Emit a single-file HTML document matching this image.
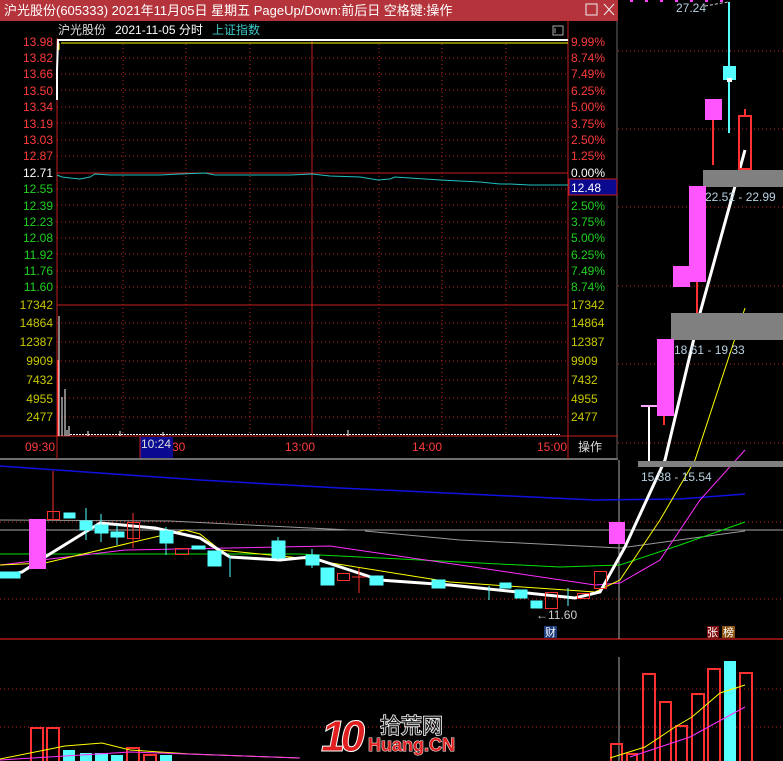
<!DOCTYPE html>
<html><head><meta charset="utf-8"><style>
html,body{margin:0;padding:0;background:#000;width:783px;height:761px;overflow:hidden}
svg{display:block;font-family:"Liberation Sans","Noto Sans CJK SC",sans-serif}
</style></head><body>
<svg width="783" height="761" viewBox="0 0 783 761" xmlns="http://www.w3.org/2000/svg">
<rect width="783" height="761" fill="#000"/>
<g stroke="#c81e1e" stroke-dasharray="1,3" stroke-width="1">
<line x1="618" y1="51" x2="783" y2="51"/><line x1="618" y1="129" x2="783" y2="129"/><line x1="618" y1="207" x2="783" y2="207"/><line x1="618" y1="286" x2="783" y2="286"/><line x1="618" y1="364" x2="783" y2="364"/><line x1="618" y1="443" x2="783" y2="443"/>
<line x1="0" y1="522" x2="783" y2="522"/><line x1="0" y1="599" x2="783" y2="599"/>
<line x1="0" y1="689" x2="783" y2="689"/><line x1="0" y1="727" x2="783" y2="727"/>
</g>
<line x1="630" y1="1" x2="730" y2="1" stroke="#ff40ff" stroke-width="2" stroke-dasharray="3,12"/>
<line x1="0" y1="639" x2="783" y2="639" stroke="#b01818" stroke-width="1.5"/>
<line x1="619" y1="460" x2="619" y2="639" stroke="#aaa"/>
<line x1="619" y1="657" x2="619" y2="761" stroke="#aaa"/>
<polyline points="0,466 200,480 340,488 595,500 680,499 745,494" fill="none" stroke="#1010e0" stroke-width="1.5"/>
<line x1="0" y1="530" x2="783" y2="530" stroke="#aaa"/>
<polyline points="0,520 170,521 350,530" fill="none" stroke="#999"/>
<polyline points="365,531 460,540 620,548 745,531" fill="none" stroke="#999"/>
<polyline points="0,554 300,554 560,567 620,565 680,545 745,522" fill="none" stroke="#00e000"/>
<polyline points="0,565 125,550 330,546 460,565 595,585 620,583 660,560 700,500 745,450" fill="none" stroke="#ff30ff"/>
<polyline points="0,565 45,563 185,530 200,534 220,550 300,558 450,582 595,592 620,580 660,520 695,460 745,308" fill="none" stroke="#ffff00"/>
<polyline points="0,577 22,572 45,557 100,523 155,528 200,538 230,557 280,560 310,557 380,580 450,585 575,598 600,592 625,547 665,460 700,313 745,150" fill="none" stroke="#fff" stroke-width="3"/>
<g>
<rect x="29" y="519" width="17" height="50" fill="#ff55ff"/>
<line x1="53" y1="471" x2="53" y2="519" stroke="#ff3030"/><rect x="47.5" y="511.5" width="12" height="8" fill="none" stroke="#ff3030"/>
<g fill="#55ffff" stroke="#55ffff">
<rect x="64" y="513" width="11" height="5"/><rect x="80" y="521" width="12" height="9"/><rect x="95" y="525" width="13" height="8"/><rect x="111" y="532" width="13" height="5"/>
<rect x="160" y="531" width="13" height="12"/><rect x="192" y="546" width="13" height="3"/><rect x="208" y="551" width="13" height="15"/><rect x="272" y="541" width="13" height="17"/>
<rect x="306" y="555" width="13" height="10"/><rect x="321" y="568" width="13" height="17"/><rect x="370" y="576" width="13" height="9"/><rect x="432" y="580" width="13" height="8"/>
<rect x="500" y="583" width="11" height="5"/><rect x="515" y="590" width="12" height="8"/><rect x="531" y="601" width="11" height="7"/>
<rect x="0" y="572" width="20" height="6"/>
<line x1="86" y1="508" x2="86" y2="540"/><line x1="101" y1="514" x2="101" y2="542"/><line x1="117" y1="525" x2="117" y2="545"/><line x1="166" y1="527" x2="166" y2="555"/><line x1="230" y1="556" x2="230" y2="577"/><line x1="278" y1="537" x2="278" y2="560"/><line x1="312" y1="549" x2="312" y2="568"/><line x1="489" y1="586" x2="489" y2="600"/><line x1="568" y1="588" x2="568" y2="606"/>
</g>
<g fill="none" stroke="#ff3030">
<rect x="127.5" y="522.5" width="12" height="16"/><line x1="133" y1="513" x2="133" y2="548"/>
<rect x="175.5" y="548.5" width="13" height="6"/><rect x="337.5" y="573.5" width="12" height="7"/><line x1="359" y1="568" x2="359" y2="593"/><line x1="352" y1="577" x2="366" y2="577"/>
<rect x="545.5" y="592.5" width="12" height="16"/><rect x="577.5" y="593.5" width="12" height="5"/><rect x="594.5" y="571.5" width="12" height="17"/>
</g>
<rect x="609" y="522" width="16" height="22" fill="#ff55ff"/>
<text x="536" y="619" fill="#ccc" font-size="12">←11.60</text>
<rect x="544" y="626" width="13" height="12" fill="#1a3a7a"/><text x="545" y="636" fill="#fff" font-size="11">财</text>
<rect x="707" y="626" width="12" height="12" fill="#801010"/><text x="707" y="636" fill="#fff" font-size="11">张</text>
<rect x="722" y="626" width="13" height="12" fill="#8a5010"/><text x="723" y="636" fill="#fff" font-size="11">榜</text>
</g>
<rect x="671" y="313" width="112" height="27" fill="#808080"/><text x="674" y="354" fill="#b8d0e0" font-size="12">18.61 - 19.33</text>
<rect x="703" y="170" width="80" height="17" fill="#808080"/><text x="705" y="201" fill="#b8d0e0" font-size="12">22.52 - 22.99</text>
<rect x="638" y="461" width="145" height="6" fill="#808080"/><text x="641" y="481" fill="#b8d0e0" font-size="12">15.38 - 15.54</text>
<line x1="649" y1="406" x2="649" y2="461" stroke="#fff" stroke-width="2"/><line x1="641" y1="406" x2="657" y2="406" stroke="#ffaaff" stroke-width="2"/>
<line x1="664" y1="416" x2="664" y2="425" stroke="#ff3030" stroke-width="2"/><rect x="657" y="339" width="17" height="77" fill="#ff55ff"/>
<rect x="673" y="266" width="17" height="21" fill="#ff55ff"/><line x1="697" y1="282" x2="697" y2="313" stroke="#ff3030" stroke-width="2"/>
<rect x="689" y="186" width="17" height="96" fill="#ff55ff"/>
<line x1="713" y1="120" x2="713" y2="165" stroke="#ff3030" stroke-width="2"/><rect x="705" y="99" width="17" height="21" fill="#ff55ff"/>
<line x1="729" y1="2" x2="729" y2="133" stroke="#55ffff" stroke-width="2"/><rect x="723" y="66" width="13" height="14" fill="#55ffff"/><rect x="727" y="78" width="5" height="4" fill="#fff"/>
<rect x="739" y="116" width="12" height="53" fill="none" stroke="#ff3030" stroke-width="2"/><line x1="745" y1="109" x2="745" y2="116" stroke="#ff3030" stroke-width="2"/>
<text x="676" y="12" fill="#b8d0e0" font-size="12">27.24</text><line x1="705" y1="6" x2="728" y2="2" stroke="#ccc" stroke-dasharray="3,2"/>
<g fill="none" stroke="#ff3030" stroke-width="2">
<rect x="31" y="728" width="12" height="34"/><rect x="47" y="728" width="12" height="34"/><rect x="127" y="748" width="12" height="14"/><rect x="144" y="755" width="12" height="8"/>
<rect x="611" y="744" width="11" height="18"/><rect x="627" y="754" width="10" height="8"/>
<rect x="643" y="674" width="12" height="88"/><rect x="660" y="702" width="11" height="60"/><rect x="676" y="726" width="11" height="36"/><rect x="692" y="694" width="12" height="68"/><rect x="708" y="669" width="12" height="93"/><rect x="740" y="673" width="12" height="89"/>
</g>
<g fill="#55ffff"><rect x="724" y="661" width="12" height="100"/><rect x="63" y="750" width="12" height="11"/><rect x="80" y="753" width="12" height="8"/><rect x="95" y="753" width="13" height="8"/><rect x="111" y="755" width="12" height="6"/><rect x="160" y="755" width="12" height="6"/></g>
<polyline points="0,759 65,746 102,743 130,750 190,754 300,758" fill="none" stroke="#ffff00"/>
<polyline points="0,760 130,752 300,758" fill="none" stroke="#ff30ff"/>
<polyline points="610,758 645,747 675,727 692,717 720,693 745,685" fill="none" stroke="#ffff00"/>
<polyline points="630,757 690,737 745,707" fill="none" stroke="#ff30ff"/>
<text x="321" y="751" fill="#e02020" font-size="44" font-weight="bold" font-style="italic" letter-spacing="-5" stroke="#fff" stroke-width="1">10</text>
<text x="380" y="733" fill="#222" stroke="#fff" stroke-width="1.5" paint-order="stroke" font-size="21">拾荒网</text>
<text x="368" y="751" fill="#e02020" stroke="#fff" stroke-width="1" paint-order="stroke" font-size="18" font-weight="bold">Huang.CN</text>

<rect x="0" y="0" width="618" height="460" fill="#000"/>
<rect x="0" y="0" width="618" height="21" fill="#b5343b"/>
<text x="4" y="15" fill="#fff" font-size="13">沪光股份(605333) 2021年11月05日 星期五 PageUp/Down:前后日 空格键:操作</text>
<rect x="586" y="4" width="11" height="11" fill="none" stroke="#eee"/>
<path d="M604 4 L614 15 M614 4 L604 15" stroke="#eee"/>
<line x1="0" y1="459" x2="618" y2="459" stroke="#ddd"/>
<line x1="617" y1="21" x2="617" y2="460" stroke="#666"/>
<text x="58" y="34" fill="#ddd" font-size="12">沪光股份</text><text x="115" y="34" fill="#fff" font-size="12">2021-11-05 分时</text><text x="212" y="34" fill="#3cc8c8" font-size="12">上证指数</text>
<rect x="553" y="26" width="10" height="9" fill="none" stroke="#aaa"/><line x1="555" y1="28" x2="555" y2="33" stroke="#aaa"/>
<g stroke="#c81e1e" stroke-dasharray="1,3">
<line x1="57" y1="58" x2="568" y2="58"/><line x1="57" y1="74" x2="568" y2="74"/><line x1="57" y1="90" x2="568" y2="90"/><line x1="57" y1="107" x2="568" y2="107"/><line x1="57" y1="123" x2="568" y2="123"/><line x1="57" y1="140" x2="568" y2="140"/><line x1="57" y1="156" x2="568" y2="156"/>
<line x1="57" y1="189" x2="568" y2="189"/><line x1="57" y1="205" x2="568" y2="205"/><line x1="57" y1="222" x2="568" y2="222"/><line x1="57" y1="238" x2="568" y2="238"/><line x1="57" y1="254" x2="568" y2="254"/><line x1="57" y1="271" x2="568" y2="271"/><line x1="57" y1="287" x2="568" y2="287"/>
<line x1="57" y1="323" x2="568" y2="323"/><line x1="57" y1="342" x2="568" y2="342"/><line x1="57" y1="361" x2="568" y2="361"/><line x1="57" y1="380" x2="568" y2="380"/><line x1="57" y1="398" x2="568" y2="398"/><line x1="57" y1="417" x2="568" y2="417"/>
<line x1="123" y1="40" x2="123" y2="436"/><line x1="186" y1="40" x2="186" y2="436"/><line x1="250" y1="40" x2="250" y2="436"/><line x1="379" y1="40" x2="379" y2="436"/><line x1="442" y1="40" x2="442" y2="436"/><line x1="506" y1="40" x2="506" y2="436"/>
</g>
<g stroke="#c81e1e" stroke-width="1">
<line x1="57" y1="38" x2="57" y2="459"/><line x1="568" y1="21" x2="568" y2="459"/><line x1="312" y1="40" x2="312" y2="436"/>
<line x1="57" y1="173" x2="568" y2="173"/><line x1="57" y1="305" x2="568" y2="305"/><line x1="0" y1="436" x2="618" y2="436"/>
</g>
<line x1="61" y1="43" x2="568" y2="43" stroke="#ffff00"/><line x1="59" y1="43" x2="59" y2="50" stroke="#ffff00"/>
<polyline points="57,100 57,70 58,40 568,40" fill="none" stroke="#fff" stroke-width="2"/>
<polyline points="57,175 62,177 70,178 80,179 90,177 95,174 110,175 130,175 160,175 180,174 205,173 215,175 250,175 290,175 312,174 330,176 360,177 378,180 390,179 395,177 410,178 440,180 480,182 500,184 510,184 530,185 568,185" fill="none" stroke="#20c0c0"/>
<g stroke="#fff"><line x1="59" y1="436" x2="59" y2="316"/><line x1="62" y1="436" x2="62" y2="397"/><line x1="65" y1="436" x2="65" y2="389"/><line x1="67" y1="436" x2="67" y2="430"/><line x1="69" y1="436" x2="69" y2="426"/><line x1="88" y1="436" x2="88" y2="431"/><line x1="120" y1="436" x2="120" y2="431"/><line x1="163" y1="436" x2="163" y2="432"/><line x1="348" y1="436" x2="348" y2="430"/>
<line x1="70" y1="434.5" x2="560" y2="434.5" stroke-dasharray="2,1"/></g>
<line x1="58" y1="436" x2="58" y2="360" stroke="#ff3030"/>
<g font-size="12" text-anchor="end">
<g fill="#ff3c3c"><text x="53" y="46">13.98</text><text x="53" y="62">13.82</text><text x="53" y="78">13.66</text><text x="53" y="95">13.50</text><text x="53" y="111">13.34</text><text x="53" y="128">13.19</text><text x="53" y="144">13.03</text><text x="53" y="160">12.87</text></g>
<text x="53" y="177" fill="#fff">12.71</text>
<g fill="#20d020"><text x="53" y="193">12.55</text><text x="53" y="210">12.39</text><text x="53" y="226">12.23</text><text x="53" y="242">12.08</text><text x="53" y="259">11.92</text><text x="53" y="275">11.76</text><text x="53" y="291">11.60</text></g>
<g fill="#c8c800"><text x="53" y="309">17342</text><text x="53" y="327">14864</text><text x="53" y="346">12387</text><text x="53" y="365">9909</text><text x="53" y="384">7432</text><text x="53" y="403">4955</text><text x="53" y="421">2477</text></g>
</g>
<g font-size="12">
<g fill="#ff3c3c"><text x="571" y="46">9.99%</text><text x="571" y="62">8.74%</text><text x="571" y="78">7.49%</text><text x="571" y="95">6.25%</text><text x="571" y="111">5.00%</text><text x="571" y="128">3.75%</text><text x="571" y="144">2.50%</text><text x="571" y="160">1.25%</text></g>
<text x="571" y="177" fill="#fff">0.00%</text>
<rect x="569" y="179" width="48" height="16" fill="#0a0a90" stroke="#c81e1e"/><text x="571" y="192" fill="#fff">12.48</text>
<g fill="#20d020"><text x="571" y="210">2.50%</text><text x="571" y="226">3.75%</text><text x="571" y="242">5.00%</text><text x="571" y="259">6.25%</text><text x="571" y="275">7.49%</text><text x="571" y="291">8.74%</text></g>
<g fill="#c8c800"><text x="571" y="309">17342</text><text x="571" y="327">14864</text><text x="571" y="346">12387</text><text x="571" y="365">9909</text><text x="571" y="384">7432</text><text x="571" y="403">4955</text><text x="571" y="421">2477</text></g>
<g fill="#ff3c3c"><text x="25" y="451">09:30</text><text x="172" y="451">30</text><text x="285" y="451">13:00</text><text x="412" y="451">14:00</text><text x="537" y="451">15:00</text></g>
<rect x="140" y="437" width="33" height="21" fill="#0a0a90"/><line x1="140" y1="437" x2="140" y2="458" stroke="#c81e1e"/><text x="141" y="448" fill="#ddd">10:24</text>
<text x="578" y="451" fill="#ddd">操作</text>
</g>
</svg>
</body></html>
